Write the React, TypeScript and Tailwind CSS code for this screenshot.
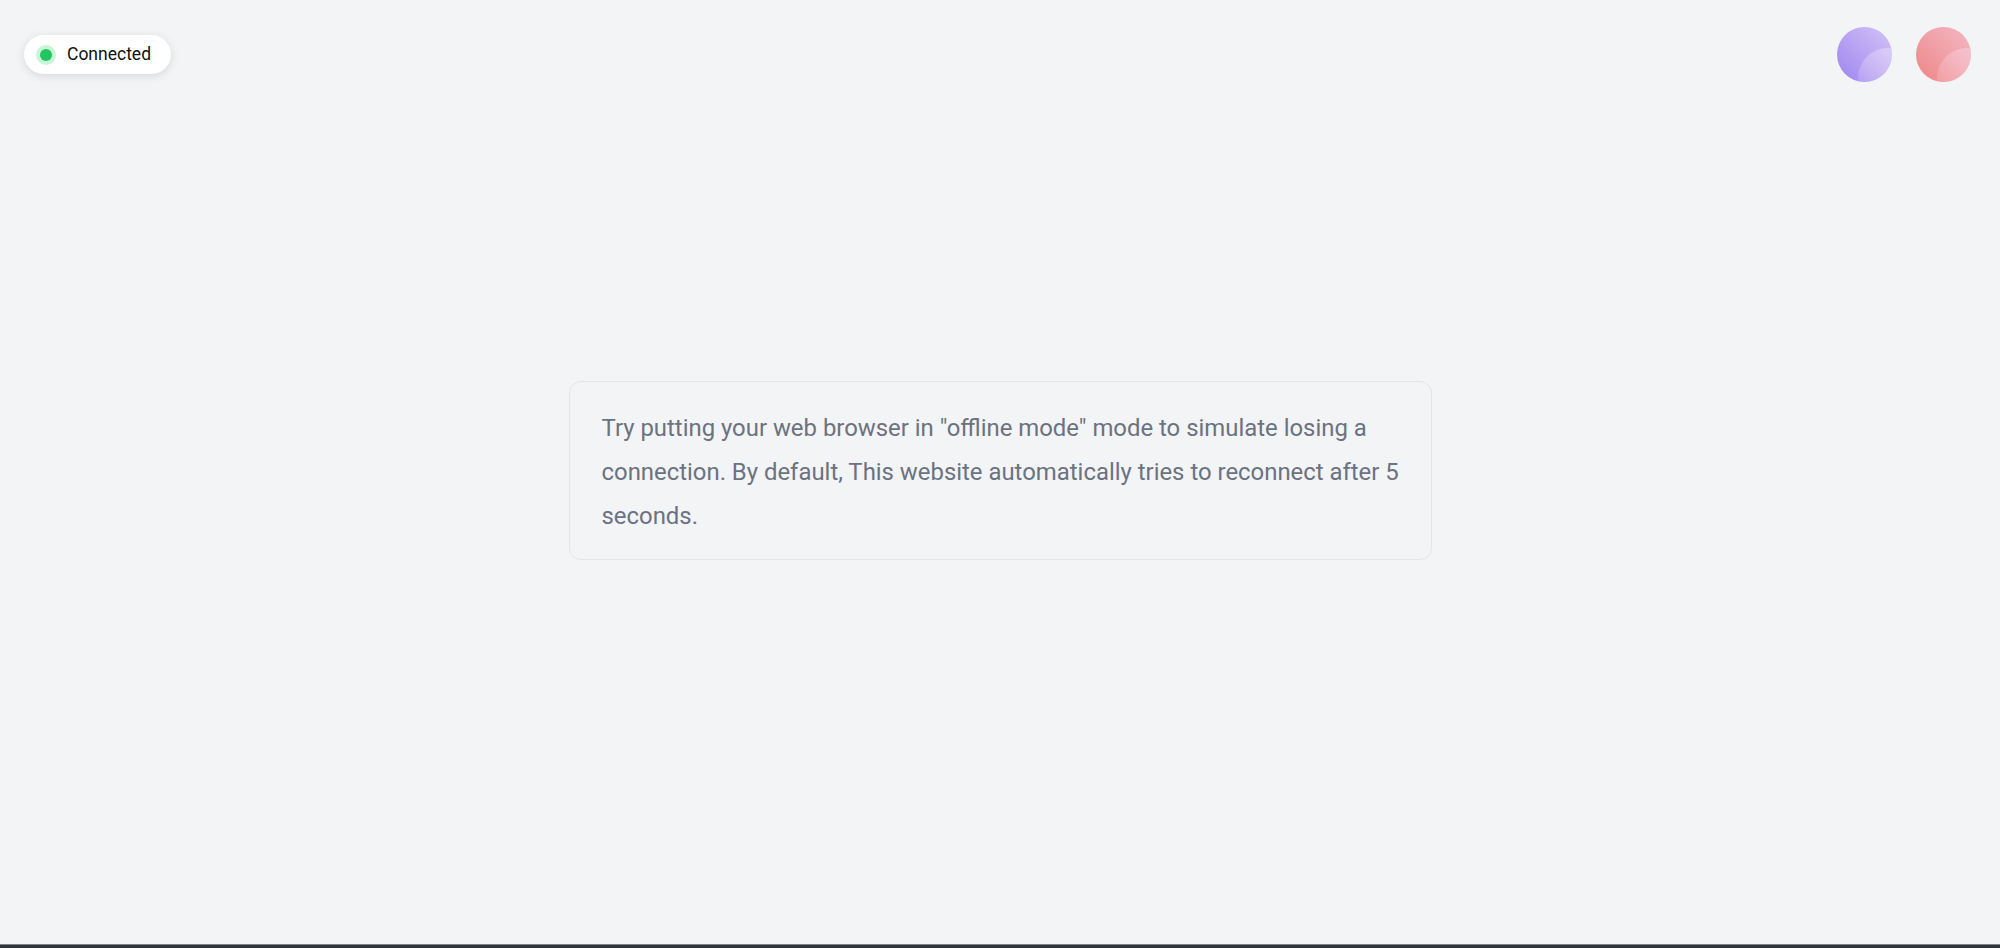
import React from "react";

function Orb({ from, to, hl }: { from: string; to: string; hl: string }) {
  return (
    <div
      className="relative w-[55px] h-[55px] rounded-full overflow-hidden"
      style={{ background: `linear-gradient(45deg, ${from} 0%, ${to} 100%)` }}
    >
      <div
        className="absolute rounded-full"
        style={{
          left: "38%",
          top: "38%",
          width: "110%",
          height: "110%",
          background: `linear-gradient(45deg, rgba(255,255,255,0.05) 0%, ${hl} 70%)`,
        }}
      />
    </div>
  );
}

export default function App() {
  return (
    <div
      className="w-full h-[948px] bg-[#f3f4f6] flex flex-col"
      style={{ fontFamily: "Roboto, 'Noto Sans', sans-serif" }}
    >
      <div className="flex-1 relative flex items-center justify-center">
        <div className="absolute left-6 top-[35px] h-[39px] pl-3 pr-[20px] bg-white rounded-full shadow-[0_2px_10px_rgba(0,0,0,0.12)] flex items-center gap-[11px]">
          <span className="w-5 h-5 rounded-full bg-[#c7f5d6] flex items-center justify-center">
            <span className="w-3 h-3 rounded-full bg-[#22c55e]" />
          </span>
          <span className="text-[17.5px] font-normal text-[#111111]">Connected</span>
        </div>
        <div className="absolute right-[29px] top-[27px] flex gap-6">
          <Orb from="#9d84ee" to="#d3c4f7" hl="rgba(238,228,250,0.45)" />
          <Orb from="#ee8585" to="#f3b9c6" hl="rgba(247,216,228,0.45)" />
        </div>
        <div className="w-[863px] h-[179px] mt-[-4px] border border-[#e3e5e8] rounded-xl pl-8 pr-5 py-6 box-border">
          <p className="text-[23.9px] leading-[44px] text-[#6b7280]">
            Try putting your web browser in "offline mode" mode to simulate losing a connection. By default, This website automatically tries to reconnect after 5 seconds.
          </p>
        </div>
      </div>
      <div className="h-px bg-[#7b8288]" />
      <div className="h-[3px] bg-[#2f3539]" />
    </div>
  );
}
